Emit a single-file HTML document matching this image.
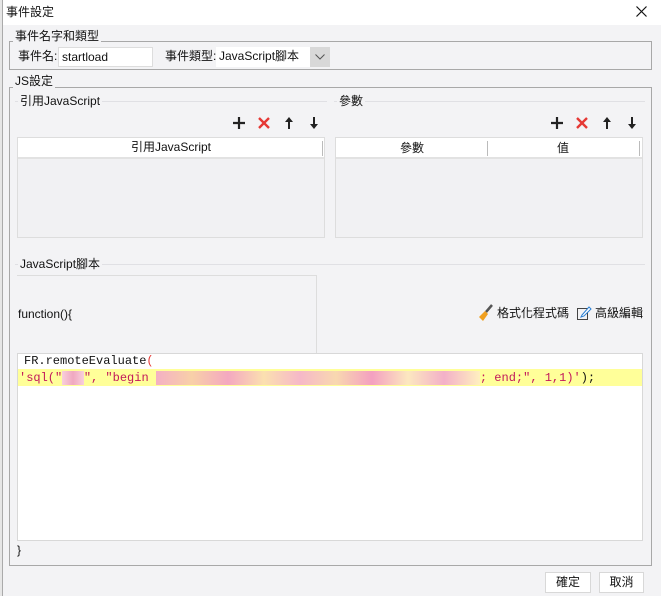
<!DOCTYPE html>
<html><head><meta charset="utf-8"><style>
*{box-sizing:border-box;margin:0;padding:0}
body{width:661px;height:596px;background:#f3f3f5;font-family:"Liberation Sans","Noto Sans CJK TC",sans-serif;font-size:12px;line-height:16px;color:#111;position:relative;overflow:hidden}
.a{position:absolute;white-space:nowrap}
.fs{position:absolute;border:1px solid #a8a8a8}
.lg{position:absolute;background:#f3f3f5;padding:0 2px;font-size:12px;line-height:14px}
.ln{position:absolute;height:1px;background:#e0e0e4}
.mono{font-family:"Liberation Mono",monospace;font-size:12px}
.btn{position:absolute;border:1px solid #d8d8d8;background:#fff;text-align:center;line-height:19px;font-size:12px}
</style></head><body>
<div class="a" style="left:0;top:0;width:661px;height:25px;background:#fff"></div>
<div class="a" style="left:0;top:0;width:3px;height:596px;background:#e6e6e6;border-right:1px solid #aaa"></div>
<div class="a" style="left:6px;top:4px">事件設定</div>
<svg class="a" style="left:636px;top:6px" width="11" height="11" viewBox="0 0 11 11"><path d="M0.5 0.5L10.5 10.5M10.5 0.5L0.5 10.5" stroke="#111" stroke-width="1.2"/></svg>

<div class="fs" style="left:9px;top:41px;width:643px;height:29px"></div>
<div class="lg" style="left:13px;top:29px">事件名字和類型</div>
<div class="a" style="left:18px;top:48px">事件名:</div>
<div class="a" style="left:58px;top:47px;width:95px;height:20px;background:#fff;border:1px solid #ddd;padding:1px 3px">startload</div>
<div class="a" style="left:165px;top:48px">事件類型:</div>
<div class="a" style="left:216px;top:47px;width:114px;height:20px;background:#fff;padding:1px 3px">JavaScript腳本</div>
<div class="a" style="left:310px;top:47px;width:20px;height:20px;background:#d8d8d8"></div>
<svg class="a" style="left:315px;top:54px" width="10" height="6" viewBox="0 0 10 6"><path d="M0.5 0.5L5 5L9.5 0.5" fill="none" stroke="#555"/></svg>

<div class="fs" style="left:9px;top:87px;width:643px;height:479px"></div>
<div class="lg" style="left:13px;top:74px">JS設定</div>

<div class="ln" style="left:15px;top:101px;width:312px"></div>
<div class="lg" style="left:18px;top:94px">引用JavaScript</div>
<div class="ln" style="left:334px;top:101px;width:311px"></div>
<div class="lg" style="left:337px;top:94px">參數</div>

<svg class="a" style="left:231px;top:115px" width="92" height="16" viewBox="0 0 92 16">
<path d="M8 2V14M2 8H14" stroke="#222" stroke-width="2.2"/>
<path d="M28 3L38 13M38 3L28 13" stroke="#e53935" stroke-width="2.4"/>
<path d="M58 14V5" stroke="#222" stroke-width="2"/><path d="M54 7L58 2L62 7Z" fill="#222"/>
<path d="M83 2V11" stroke="#222" stroke-width="2"/><path d="M79 9L83 14L87 9Z" fill="#222"/>
</svg>
<svg class="a" style="left:549px;top:115px" width="92" height="16" viewBox="0 0 92 16">
<path d="M8 2V14M2 8H14" stroke="#222" stroke-width="2.2"/>
<path d="M28 3L38 13M38 3L28 13" stroke="#e53935" stroke-width="2.4"/>
<path d="M58 14V5" stroke="#222" stroke-width="2"/><path d="M54 7L58 2L62 7Z" fill="#222"/>
<path d="M83 2V11" stroke="#222" stroke-width="2"/><path d="M79 9L83 14L87 9Z" fill="#222"/>
</svg>

<div class="a" style="left:17px;top:137px;width:308px;height:101px;border:1px solid #ddd;background:#f1f1f3"></div>
<div class="a" style="left:18px;top:138px;width:306px;height:21px;background:#fff;border-bottom:2px solid #e2e2e2;text-align:center;line-height:19px">引用JavaScript</div>
<div class="a" style="left:322px;top:141px;width:1px;height:15px;background:#bbb"></div>

<div class="a" style="left:335px;top:137px;width:308px;height:101px;border:1px solid #ddd;background:#f1f1f3"></div>
<div class="a" style="left:336px;top:138px;width:306px;height:21px;background:#fff;border-bottom:2px solid #e2e2e2"></div>
<div class="a" style="left:336px;top:140px;width:152px;text-align:center">參數</div>
<div class="a" style="left:487px;top:141px;width:1px;height:15px;background:#bbb"></div>
<div class="a" style="left:488px;top:140px;width:150px;text-align:center">值</div>
<div class="a" style="left:639px;top:141px;width:1px;height:15px;background:#bbb"></div>

<div class="ln" style="left:15px;top:264px;width:630px"></div>
<div class="lg" style="left:18px;top:257px">JavaScript腳本</div>

<div class="a" style="left:17px;top:275px;width:300px;height:79px;border-right:1px solid #ddd;border-top:1px solid #ddd"></div>
<div class="a" style="left:18px;top:306px">function(){</div>

<svg class="a" style="left:477px;top:304px" width="16" height="18" viewBox="0 0 16 18"><path d="M15 1 L9 8" stroke="#555" stroke-width="2.5"/><path d="M8 7 L11 10 L6 17 L2 13 Z" fill="#f0a020"/></svg>
<div class="a" style="left:497px;top:305px">格式化程式碼</div>
<svg class="a" style="left:576px;top:305px" width="16" height="16" viewBox="0 0 16 16"><rect x="1.5" y="3.5" width="10" height="11" fill="none" stroke="#444"/><path d="M6 10 L13 2 L15 4 L8 11 L5 12 Z" fill="#fff" stroke="#2a7fd4"/></svg>
<div class="a" style="left:595px;top:305px">高級編輯</div>

<div class="a" style="left:17px;top:353px;width:626px;height:188px;background:#fff;border:1px solid #d8d8d8"></div>
<div class="a" style="left:18px;top:369px;width:624px;height:17px;background:#ffff99"></div>
<div class="a mono" style="left:24px;top:353px;line-height:16px">FR.remoteEvaluate<span style="color:#e53935">(</span></div>
<div class="a mono" style="left:19px;top:370px;line-height:16px;color:#c2185b">'sql("<span style="background:linear-gradient(90deg,#f8d0dc,#f0a8c0,#f8d0dc);color:transparent">xxx</span>", "begin <span style="background:linear-gradient(90deg,#f4b0c4,#f8d0a8,#f4a8c0,#fbe0b0,#f6b8c8,#f8d8b0,#f4a0c0,#fce8c0,#f3b0c8,#fff0c0);color:transparent">xxxxxxxxxxxxxxxxxxxxxxxxxxxxxxxxxxxxxxxxxxxxx</span>; end;", 1,1)'<span style="color:#111">);</span></div>
<div class="a" style="left:17px;top:542px">}</div>

<div class="btn" style="left:545px;top:572px;width:46px;height:21px">確定</div>
<div class="btn" style="left:599px;top:572px;width:45px;height:21px">取消</div>
</body></html>
